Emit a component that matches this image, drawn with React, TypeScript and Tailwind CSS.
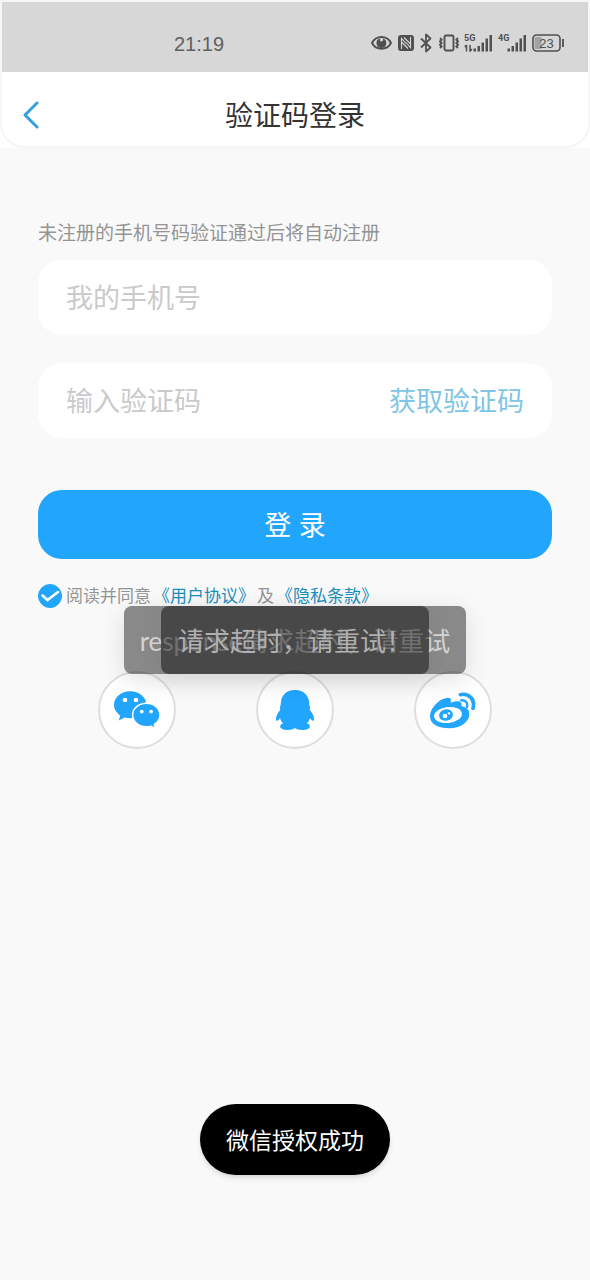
import { useState } from 'react';

function StatusIcons() {
    return (
        <div className="flex items-center text-[#505050]">
            {/* Ojo / protección visual */}
            <svg className="w-[21px] h-4 mr-1.5" viewBox="0 0 21 16" fill="none" stroke="currentColor">
                <path d="M1 8c4-8 15-8 19 0c-4 7.600-15 7.600-19 0z" strokeWidth="1.900" />
                <path d="M9.500 3.200a4.900 4.900 0 1 0 5.800 4.800c0-1.200-.4-2.200-1-3a4.900 4.900 0 0 0-2.500-1.700c.9 1.700 0 3-1.200 3.200-1.400.2-2.200-1.500-1.100-3.300z" fill="currentColor" stroke="none" />
            </svg>
            {/* NFC */}
            <svg className="w-4 h-4 mr-1.5" viewBox="0 0 16 16">
                <rect width="16" height="16" rx="3" fill="currentColor" />
                <path d="M3.500 14V3.500L8 8.500M12.500 2v10.500L8 7.500M6 2.500l6 6M4 7.500l6 6" fill="none" stroke="#d7d7d7" strokeWidth="1.100" />
            </svg>
            {/* Bluetooth */}
            <svg className="w-3 h-5 mr-1.5" viewBox="0 0 12 20" fill="none" stroke="currentColor" strokeWidth="1.800" strokeLinejoin="round">
                <path d="M1 5.500l9.500 9L6 18.500v-17l4.500 4L1 14.500" />
            </svg>
            {/* Vibración */}
            <svg className="w-[22px] h-[18px] mr-1" viewBox="0 0 22 18" fill="none" stroke="currentColor" strokeWidth="1.900">
                <rect x="6.500" y="1.500" width="9" height="15" rx="1.500" />
                <path d="M2 4l1.600 1.700L2 7.400l1.600 1.700L2 10.800l1.600 1.700L2 14M20 4l-1.600 1.700L20 7.400l-1.600 1.700 1.600 1.700-1.600 1.700L20 14" />
            </svg>
            {/* Señal 5G */}
            <svg className="w-7 h-[18px] mr-1.5" viewBox="0 0 28 18" fill="currentColor">
                <text x="0" y="7" fontSize="9" fontWeight="700" fontFamily="Roboto, sans-serif">5G</text>
                <path d="M2.500 11v6.500M.8 13l1.700-2M6 11v6.500M6 17.500l1.800-2.500" fill="none" stroke="currentColor" strokeWidth="1.500" />
                <path d="M9.500 14.500h2.500v3H9.500zM13.500 12h2.500v5.500h-2.500zM17.500 8.500h2.500v9h-2.500zM21.500 4.500h2.500v13h-2.500zM25.500 1h2.500v16.500h-2.500z" />
            </svg>
            {/* Señal 4G */}
            <svg className="w-7 h-[18px] mr-1.5" viewBox="0 0 28 18" fill="currentColor">
                <text x="0" y="7" fontSize="9" fontWeight="700" fontFamily="Roboto, sans-serif">4G</text>
                <path d="M9.500 14.500h2.500v3H9.500zM13.500 12h2.500v5.500h-2.500zM17.500 8.500h2.500v9h-2.500zM21.500 4.500h2.500v13h-2.500zM25.500 1h2.500v16.500h-2.500z" />
            </svg>
            {/* Batería */}
            <svg className="w-8 h-[18px]" viewBox="0 0 32 18">
                <rect x="2.500" y="3" width="7" height="12" rx="1" fill="#a3a3a3" />
                <rect x="1" y="1" width="27" height="16" rx="3.500" fill="none" stroke="currentColor" strokeWidth="1.600" />
                <path d="M31 5v8" stroke="currentColor" strokeWidth="1.800" />
                <text x="14.500" y="13.500" fontSize="13" textAnchor="middle" fill="currentColor" fontFamily="Liberation Sans, sans-serif">23</text>
            </svg>
        </div>
    );
}

function WechatIcon() {
    return (
        <svg className="w-[46px] h-[38px]" viewBox="0 0 44 36" aria-hidden="true">
            <path d="M15.500 0C7 0 0 5.800 0 13c0 4.200 2.400 7.800 6 10.200L4.600 28l5.700-2.900c1.600.5 3.400.8 5.200.8C24 25.900 31 20.200 31 13S24 0 15.500 0z" fill="#22a5fc" />
            <circle cx="10.500" cy="8.500" r="2.200" fill="#fff" />
            <circle cx="21" cy="8.500" r="2.200" fill="#fff" />
            <path d="M31 11.500c-7.300 0-13.200 5-13.200 11.300S23.700 34 31 34c1.500 0 3-.2 4.400-.6l4.400 2.400-1.200-4c3.200-2.100 5.400-5.300 5.400-9 0-6.300-5.700-11.300-13-11.300z" fill="#22a5fc" stroke="#fff" strokeWidth="1.400" />
            <circle cx="26.500" cy="19.500" r="1.800" fill="#fff" />
            <circle cx="35.500" cy="19.500" r="1.800" fill="#fff" />
        </svg>
    );
}

function QqIcon() {
    return (
        <svg className="w-[38px] h-10" viewBox="0 0 36 40" preserveAspectRatio="none" fill="#22a5fc" aria-hidden="true">
            <path d="M18 0C9.500 0 4.600 6 4.600 13.500c0 1.500-.8 2.400-.8 4.200 0 1.200.3 1.700.1 2.300C1.500 23 0 26.300 0 28.800c0 1.800.6 2.200 1.200 2 .9-.3 2-1.700 2.600-2.900.5 2 1.500 3.900 3 5.400-1.800.7-2.900 1.800-2.900 3.200 0 2.200 3.200 3.500 7.200 3.500 3 0 5.600-.8 6.900-2 1.300 1.200 3.900 2 6.900 2 4 0 7.200-1.300 7.200-3.500 0-1.400-1.100-2.500-2.900-3.200 1.500-1.500 2.500-3.400 3-5.400.6 1.200 1.700 2.600 2.600 2.900.6.200 1.200-.2 1.200-2 0-2.500-1.500-5.800-3.900-8.800-.2-.6.1-1.100.1-2.300 0-1.800-.8-2.700-.8-4.200C31.400 6 26.500 0 18 0z" />
        </svg>
    );
}

function WeiboIcon() {
    return (
        <svg className="w-[46px] h-[37px]" viewBox="0 0 138 111" fill="none" aria-hidden="true">
            <path d="M50 18c11-2 15 4 12 14 11-5 25-7 31 0 3 3 2 7 1 10 14 3 24 11 24 24 0 24-28 43-60 43C24 109 0 97 0 73 0 48 27 21 50 18z" fill="#22a5fc" />
            <ellipse cx="54" cy="69" rx="42" ry="24" transform="rotate(-6 54 69)" fill="#fff" />
            <ellipse cx="48" cy="69" rx="21" ry="17" transform="rotate(-12 48 69)" fill="#22a5fc" />
            <circle cx="45" cy="72" r="7" fill="#fff" />
            <circle cx="57" cy="64" r="3.500" fill="#fff" />
            <path d="M91 8c24-6 46 14 38 41" stroke="#22a5fc" strokeWidth="11" strokeLinecap="round" />
            <path d="M93 25c12-2 21 7 18 20" stroke="#22a5fc" strokeWidth="7" strokeLinecap="round" />
        </svg>
    );
}

const socials = [
    { name: '微信', icon: <WechatIcon /> },
    { name: 'QQ', icon: <QqIcon /> },
    { name: '微博', icon: <WeiboIcon /> },
];

export default function App() {
    const [agreed, setAgreed] = useState(true);

    return (
        <div className="relative min-h-screen bg-[#f9f9f9] font-['Liberation_Sans','Noto_Sans_CJK_SC',sans-serif]">
            <header className="bg-white">
                <div className="overflow-hidden rounded-b-3xl border-2 border-[#f6f6f6]">
                    {/* Barra de estado */}
                    <div className="flex h-[70px] items-center justify-between bg-[#d7d7d7] pt-3 pl-43 pr-6">
                        <span className="pt-0.5 text-xl text-[#606060]">21:19</span>
                        <StatusIcons />
                    </div>
                    {/* Título */}
                    <div className="grid h-[74px] grid-cols-[64px_1fr_64px] items-center pt-3">
                        <button type="button" aria-label="返回" className="pl-5">
                            <svg className="w-[18px] h-7" viewBox="0 0 18 28" fill="none" stroke="#369fdc" strokeWidth="3" strokeLinecap="round" strokeLinejoin="round">
                                <path d="M15 2L3 14l12 12" />
                            </svg>
                        </button>
                        <h1 className="pt-1 text-center text-[28px] leading-8 text-[#333]">验证码登录</h1>
                    </div>
                </div>
            </header>

            <main className="px-[38px] pt-[72px]">
                <form onSubmit={(e) => e.preventDefault()}>
                    <label htmlFor="phone" className="block text-[19px] leading-7 text-[#949494]">
                        未注册的手机号码验证通过后将自动注册
                    </label>
                    <input
                        id="phone"
                        type="tel"
                        placeholder="我的手机号"
                        className="mt-3 h-[75px] w-full rounded-3xl bg-white px-7 pt-1 text-[27px] text-[#333] outline-none placeholder:text-[#cacaca]"
                    />
                    <div className="mt-7 flex h-[75px] items-center rounded-3xl bg-white px-7 pt-1">
                        <input
                            type="text"
                            aria-label="验证码"
                            placeholder="输入验证码"
                            className="min-w-0 flex-1 text-[27px] text-[#333] outline-none placeholder:text-[#cacaca]"
                        />
                        <button type="button" className="text-[27px] text-[#80c4e6]">获取验证码</button>
                    </div>
                    <button type="submit" className="mt-[52px] h-[69px] w-full rounded-3xl bg-[#22a5fc] pt-1 text-[27px] text-white">
                        登 录
                    </button>

                    {/* Términos */}
                    <div className="mt-[22px] flex items-center gap-0.5 text-[17px] leading-7 text-[#949494]">
                        <label className="flex items-center gap-1">
                            <span className="relative flex">
                                <input
                                    type="checkbox"
                                    checked={agreed}
                                    onChange={(e) => setAgreed(e.target.checked)}
                                    className="peer h-6 w-6 appearance-none rounded-full border border-[#22a5fc] checked:bg-[#22a5fc]"
                                />
                                <svg className="pointer-events-none absolute inset-0 hidden h-6 w-6 peer-checked:block" viewBox="0 0 24 24" fill="none" stroke="#fff" strokeWidth="2.600" strokeLinecap="round">
                                    <path d="M4.500 11.500l5 4.500 10.500-8" />
                                </svg>
                            </span>
                            <span className="pt-0.5">阅读并同意</span>
                        </label>
                        <a href="#user" className="pt-0.5 text-[#1a8fbe]">《用户协议》</a>
                        <span className="pt-0.5">及</span>
                        <a href="#privacy" className="pt-0.5 text-[#1a8fbe]">《隐私条款》</a>
                    </div>
                </form>

                {/* Acceso con redes */}
                <div className="mt-[60px] grid grid-cols-3 justify-items-center px-5">
                    {socials.map((s) => (
                        <button
                            key={s.name}
                            type="button"
                            aria-label={s.name}
                            className="flex h-[78px] w-[78px] items-center justify-center rounded-full border-2 border-[#dedede] bg-white"
                        >
                            {s.icon}
                        </button>
                    ))}
                </div>
            </main>

            {/* Avisos superpuestos */}
            <div className="pointer-events-none absolute inset-x-0 top-[606px] grid justify-items-center font-['Lato','Noto_Sans_CJK_SC',sans-serif] text-[26px] leading-[66px] whitespace-nowrap">
                <div className="col-start-1 row-start-1 rounded-lg bg-black/45 px-4 pt-0.5 text-[#d4d4d4] shadow-[0_6px_24px_rgba(0,0,0,0.12)]">
                    response请求超时，请重试
                </div>
                <div className="col-start-1 row-start-1 rounded-lg bg-black/47 px-[17px] pt-0.5 text-[#b0b0b0] shadow-[0_6px_24px_rgba(0,0,0,0.06)]">
                    请求超时，请重试！
                </div>
            </div>
            <div className="pointer-events-none absolute inset-x-0 top-[1104px] flex justify-center">
                <div className="rounded-full bg-black px-[26px] pt-[3px] text-[23px] leading-[68px] text-white shadow-md">微信授权成功</div>
            </div>
        </div>
    );
}
